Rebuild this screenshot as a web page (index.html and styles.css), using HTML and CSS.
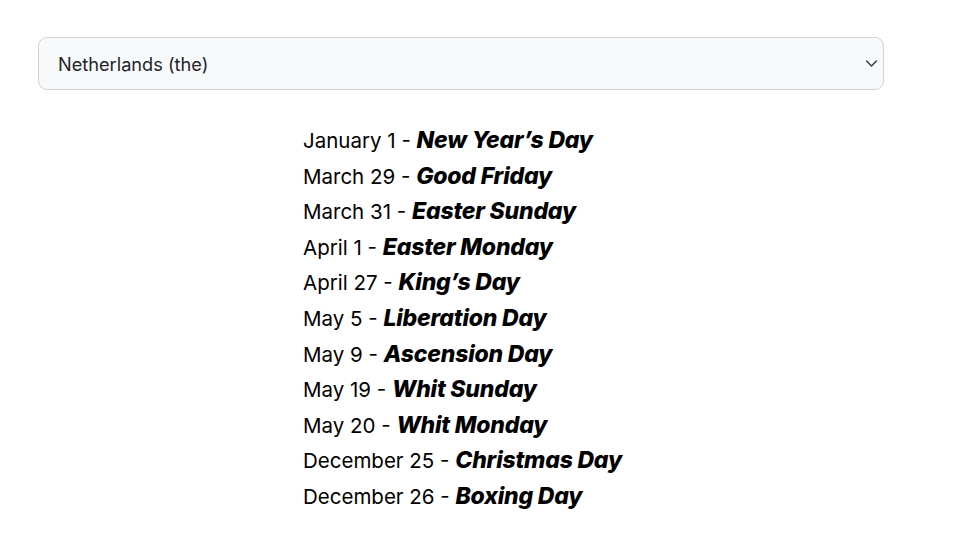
FILE: index.html
```html
<!DOCTYPE html>
<html>
<head>
<meta charset="utf-8">
<link rel="stylesheet" href="styles.css">
</head>
<body>
<main class="page">
  <div class="select-wrap">
    <div class="select">
      <span class="select-value">Netherlands (the)</span>
      <svg class="chevron" width="13" height="13" viewBox="0 0 16 16"><path d="M2 5l6 6 6-6" fill="none" stroke="#343a40" stroke-width="1.8" stroke-linecap="round" stroke-linejoin="round"/></svg>
    </div>
  </div>
  <ul class="holidays">
    <li>January 1 - <strong>New Year’s Day</strong></li>
    <li>March 29 - <strong>Good Friday</strong></li>
    <li>March 31 - <strong>Easter Sunday</strong></li>
    <li>April 1 - <strong>Easter Monday</strong></li>
    <li>April 27 - <strong>King’s Day</strong></li>
    <li>May 5 - <strong>Liberation Day</strong></li>
    <li>May 9 - <strong>Ascension Day</strong></li>
    <li>May 19 - <strong>Whit Sunday</strong></li>
    <li>May 20 - <strong>Whit Monday</strong></li>
    <li>December 25 - <strong>Christmas Day</strong></li>
    <li>December 26 - <strong>Boxing Day</strong></li>
  </ul>
</main>
</body>
</html>
```
FILE: styles.css
```css
html, body {
  margin: 0;
  padding: 0;
  background: #fff;
}
body {
  font-family: Inter, "Noto Sans", sans-serif;
  color: #000;
}
.page {
  padding: 37px 76px 0 38px;
}
.select {
  height: 51px;
  border: 1px solid #cfd3d8;
  border-radius: 9px;
  background: #f8f9fa;
  display: flex;
  align-items: center;
  justify-content: space-between;
  padding: 0 5px 0 19px;
  color: #212529;
  font-size: 18.2px;
}
.chevron {
  display: block;
}
.holidays {
  list-style: none;
  margin: 33px 0 0 0;
  padding: 0 0 0 265px;
}
.holidays li {
  font-size: 20.5px;
  line-height: 35.6px;
  height: 35.6px;
}
.holidays strong {
  font-style: italic;
  font-weight: 800;
  font-size: 23px;
  letter-spacing: -0.2px;
}
```
